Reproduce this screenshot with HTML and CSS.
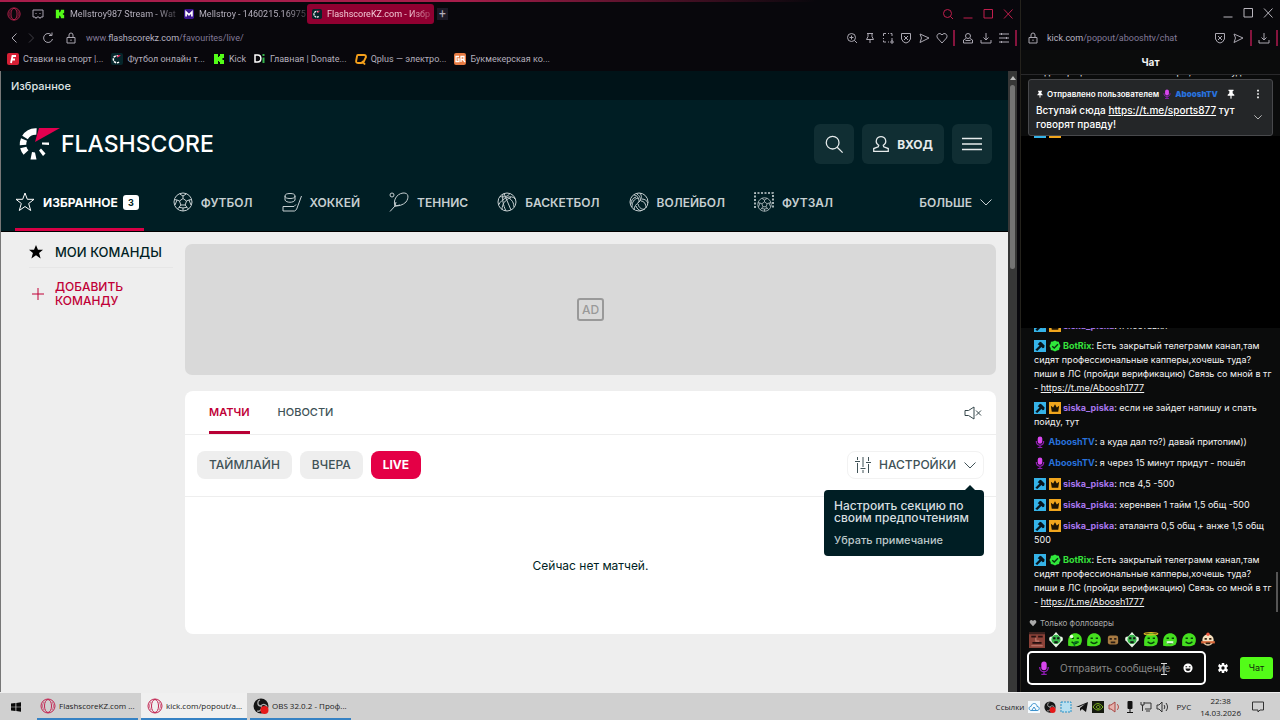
FILE: index.html
```html
<!DOCTYPE html>
<html lang="ru">
<head>
<meta charset="utf-8">
<title>FlashscoreKZ.com - Избранное</title>
<link rel="stylesheet" href="styles.css">
</head>
<body>
<svg class="defs" aria-hidden="true">
  <symbol id="lock" viewBox="0 0 12 12"><path d="M2 5.500h8V11H2zM4 5.500V3a2 2 0 0 1 4 0v2.500M6 7.500v1.500"/></symbol>
  <symbol id="search" viewBox="0 0 12 12"><circle cx="5.500" cy="5.500" r="4"/><path d="M8.500 8.500 11 11"/></symbol>
  <symbol id="zoomin" viewBox="0 0 12 12"><circle cx="5.500" cy="5.500" r="4"/><path d="M8.500 8.500 11 11M3.500 5.500h4M5.500 3.500v4"/></symbol>
  <symbol id="pin" viewBox="0 0 12 12"><path d="M3 1.500h6M4 1.500v3L2.500 7.500h7L8 4.500v-3M6 7.500V11"/></symbol>
  <symbol id="pinsolid" viewBox="0 0 12 12"><path d="M3 1h6v1.500H8V5l2 2v1H6.700v3L6 12l-.700-1V8H2V7l2-2V2.500H3z" fill="#fff" stroke="none"/></symbol>
  <symbol id="snap" viewBox="0 0 12 12"><path d="M1.500 4V1.500H4M6 1.500h1M8.500 1.500H10V4M10 6v3M1.500 6v1M1.500 8.500V10H4M6 10h1M8 10h4M10 8v4"/></symbol>
  <symbol id="shield" viewBox="0 0 12 12"><path d="M1.500 1.500h9V7L8.500 10 6 11 3.500 10 1.500 7zM4 4l4 4M8 4 4 8"/></symbol>
  <symbol id="send" viewBox="0 0 12 12"><path d="M2 2l9 4-9 4.500L3.500 6z"/></symbol>
  <symbol id="heart" viewBox="0 0 12 12"><path d="M6 11 1.500 6C-.5 3 3.500-.5 6 3 8.500-.5 12.500 3 10.500 6z"/></symbol>
  <symbol id="person" viewBox="0 0 12 12"><circle cx="6" cy="4" r="2.500"/><path d="M4 6.500 1.500 8v3h9V8L8 6.500M3.500 8.500h5"/></symbol>
  <symbol id="download" viewBox="0 0 12 12"><path d="M6 1v7M3.500 5.500 6 8l2.500-2.500M1 8v3h10V8"/></symbol>
  <symbol id="panel" viewBox="0 0 12 12"><path d="M1 2h2M4 2h7M1 6h7M9 6h2M1 10h2M4 10h7M3.500 1v2M8.500 5v2M3.500 9v2"/></symbol>
  <symbol id="min" viewBox="0 0 12 12"><path d="M1.500 10h9"/></symbol>
  <symbol id="max" viewBox="0 0 12 12"><path d="M2 1.500h8.500V10H2z"/></symbol>
  <symbol id="close" viewBox="0 0 12 12"><path d="M2 1.500l8.500 9M10.500 1.500 2 10.500"/></symbol>
  <symbol id="down" viewBox="0 0 12 12"><path d="M.5 3.500 6 9l5.500-5.500"/></symbol>
  <symbol id="opera" viewBox="0 0 16 16"><circle cx="8" cy="8" r="7" fill="none" stroke="#c22350"/><ellipse cx="8" cy="8" rx="3.500" ry="6.500" fill="none" stroke="#c22350"/><path d="M4 4c-2 3-2 5 0 8M12 4c2 3 2 5 0 8" fill="none" stroke="#c22350" stroke-width=".6"/></symbol>
  <symbol id="kick" viewBox="0 0 12 12"><path d="M1 1h4v3h1V3h1V1h4v4H9.500v2H11v4H7V9H6V8H5v3H1z" fill="#53fc18"/></symbol>
  <symbol id="fs" viewBox="0 0 12 12"><rect width="12" height="12" rx="2" fill="#06262b"/><path d="M8 3.500A3.500 3.500 0 1 0 8 9" fill="none" stroke="#fff" stroke-width="1.500" stroke-dasharray="2.500 .8"/><path d="M6 5l1-3h3z" fill="#e0124d"/></symbol>
  <symbol id="axe" viewBox="0 0 13 13"><rect width="13" height="13" fill="#35b3e8"/><path d="M1.500 10.500 6 6 4 4.500 6.500 2l1.500.5L11.500 6 11 8.500 9.500 9 8 7.500l-4.500 4.500z" fill="#08151c"/></symbol>
  <symbol id="crown" viewBox="0 0 13 13"><rect width="13" height="13" fill="#f0a51d"/><path d="M2 4l2.500 2 2-3.500L8.500 6 11 4l-1 6.500H3z" fill="#1c1303"/></symbol>
  <symbol id="ok" viewBox="0 0 13 13"><path d="M6.500.5 8.400 1.600 10.600 1.800 11.200 4 12.500 6.500 11.300 8.600 10.900 10.900 8.600 11.300 6.500 12.500 4.400 11.400 2 10.900 1.700 8.700.5 6.500 1.700 4.300 2.100 2 4.300 1.700z" fill="#2fe73b"/><path d="M3.500 6.700l2.200 2 4-4" fill="none" stroke="#0a3010" stroke-width="1.500"/></symbol>
  <symbol id="mic" viewBox="0 0 13 13"><rect x="4" y=".5" width="5" height="8" rx="2.500" fill="#d946ef"/><path d="M2.500 5.500c0 6 8 6 8 0M6.500 10v2.500M4 12.500h5" fill="none" stroke="#8f1cb4" stroke-width="1.300"/></symbol>
  <symbol id="ball" viewBox="0 0 20 20"><circle cx="10" cy="10" r="9"/><path d="M10 6.500l3.500 2.500-1.300 4H7.800L6.500 9zM10 6.500V4M13.500 9l2.500-1M12.200 13l1.800 2.300M7.800 13 6 15.300M6.500 9 4 8M6.500 1.800 10 4l3.500-2.200M18.700 7.500 16 8l2 5M15.500 17l-1.500-1.700-4 .7-4-.7L4.500 17M2 13l2-5-2.700-.5M10 16v3"/></symbol>
  <symbol id="obs" viewBox="0 0 16 16"><circle cx="8" cy="8" r="7.500" fill="#151515"/><path d="M8 8c-4 0-4-5-1-6M8 8c2-3 6-1 6 1M8 8c2 3-1 6-4 5" fill="none" stroke="#aaa" stroke-width="1.300"/><circle cx="11.500" cy="12" r="4" fill="#e61919"/></symbol>
  <symbol id="slime" viewBox="0 0 14 14"><path d="M1 8c0-9 12-9 12-1 0 6-5 6-12 5z" fill="#45e01f"/><path d="M4 5.500h2M8.500 5.500h2M4 8.500c2 2 4 2 6 0" fill="none" stroke="#06410a" stroke-width="1.200"/></symbol>
  <symbol id="skull" viewBox="0 0 14 14"><path d="M7 0l6 7-6 6.500L1 7z" fill="#e9f6e6"/><circle cx="3" cy="6" r="2" fill="#e9f6e6"/><circle cx="11" cy="6" r="2" fill="#e9f6e6"/><circle cx="7" cy="6.500" r="4" fill="#37b64a"/><path d="M4.500 5.500h2M8 5.500h2M5.500 9h3" stroke="#111" stroke-width="1.800"/></symbol>
</svg>

<main class="desktop">
  <section class="browser">
    <div class="tabs">
      <svg class="i14"><use href="#opera"/></svg>
      <svg class="i12 line badge" viewBox="0 0 12 12"><path d="M1 2h10v7H9l-1 1.500L7 9H5L4 10.500 3 9H1zM3.500 5.500h1M7.500 5.500h1"/></svg>
      <button class="tab"><svg class="i10"><use href="#kick"/></svg><span>Mellstroy987 Stream - Wat</span></button>
      <button class="tab"><svg class="i10" viewBox="0 0 12 12"><rect width="12" height="12" rx="2" fill="#3b168f"/><path d="M2.500 9V3.500L6 7l3.500-3.500V9" fill="none" stroke="#fff" stroke-width="2"/></svg><span>Mellstroy - 1460215.16975</span></button>
      <button class="tab active"><svg class="i10"><use href="#fs"/></svg><span>FlashscoreKZ.com - Избр</span></button>
      <button class="plus" aria-label="Новая вкладка">+</button>
      <div class="wins red"><svg class="i12 line"><use href="#search"/></svg><svg class="i12 line"><use href="#min"/></svg><svg class="i12 line"><use href="#max"/></svg><svg class="i12 line"><use href="#close"/></svg></div>
    </div>
    <div class="address">
      <svg class="i12 line" viewBox="0 0 12 12"><path d="M8.500 1.500 4 6l4.500 4.500"/></svg>
      <svg class="i12 line dim" viewBox="0 0 12 12"><path d="M4 1.500 8.500 6 4 10.500"/></svg>
      <svg class="i12 line" viewBox="0 0 12 12"><path d="M9.500 3A4.500 4.500 0 1 0 10.500 7M10 .5v3H7"/></svg>
      <svg class="i12 line lock"><use href="#lock"/></svg>
      <p class="url">www.<b>flashscorekz.com</b>/favourites/live/</p>
      <div class="tools"><svg class="i12 line"><use href="#zoomin"/></svg><svg class="i12 line"><use href="#pin"/></svg><svg class="i12 line"><use href="#snap"/></svg><svg class="i12 line"><use href="#shield"/></svg><svg class="i12 line"><use href="#send"/></svg><svg class="i12 line"><use href="#heart"/></svg></div>
      <i class="bar"></i>
      <div class="tools"><svg class="i12 line"><use href="#person"/></svg><svg class="i12 line"><use href="#download"/></svg><svg class="i12 line"><use href="#panel"/></svg></div>
      <i class="bar"></i>
    </div>
    <nav class="marks">
      <a href="#"><svg class="i12" viewBox="0 0 12 12"><rect width="12" height="12" rx="2" fill="#d71f35"/><path d="M4 10 5.500 3H9M4.700 6.500H8" fill="none" stroke="#fff" stroke-width="1.800"/></svg>Ставки на спорт |...</a>
      <a href="#"><svg class="i12"><use href="#fs"/></svg>Футбол онлайн т...</a>
      <a href="#"><svg class="i12"><use href="#kick"/></svg>Kick</a>
      <a href="#"><svg class="i12" viewBox="0 0 12 12"><path d="M1 2h2.500c4.500 0 4.500 7 0 7H1z" fill="none" stroke="#fff" stroke-width="1.500"/><path d="M9.500 4.500V10M9.500 1v2" stroke="#35b34c" stroke-width="2"/></svg>Главная | Donate...</a>
      <a href="#"><svg class="i12" viewBox="0 0 12 12"><path d="M3 2h6c2 0 2 1 2 2L9 8c0 2-1 2-3 2H3C1 10 1 9 1.300 7L2 3.500C2 2 2 2 3 2zM7 8l3 3.500" fill="none" stroke="#f5a01b" stroke-width="1.900"/></svg>Qplus — электро...</a>
      <a href="#"><svg class="i12" viewBox="0 0 12 12"><rect width="12" height="12" rx="2" fill="#e77a42"/><path d="M5 3.500H2v5h3V6H3.500M7 9V3.500h3v3H7M9 6.500 11 9" fill="none" stroke="#fff" stroke-width="1.300"/></svg>Букмекерская ко...</a>
    </nav>

    <div class="viewport">
      <div class="site">
        <div class="crumb">Избранное</div>
        <header class="head">
          <div class="brandrow">
            <a class="logo" href="#"><svg viewBox="0 0 44 34"><g fill="none" stroke="#fff" stroke-width="6.500"><path d="M20.500 4.500A12.500 12.500 0 0 0 9 10.500"/><path d="M8 12.500A12.500 12.500 0 0 0 7 18"/><path d="M7.300 20.500A12.500 12.500 0 0 0 10 25.500"/></g><path d="M16 25l-1.500 7.500h6L19 25.500zM23 23.500l4 5.500 2.500-2.500-4.500-5zM26 15.500h7v2.500l-7-.5z" fill="#fff"/><path d="M23 1h21L19 15z" fill="#e3004f"/></svg><span>FLASHSCORE</span></a>
            <button class="hbtn" aria-label="Поиск"><svg class="i20 line" viewBox="0 0 22 22"><circle cx="9.500" cy="9.500" r="7"/><path d="m14.500 14.500 6 6"/></svg></button>
            <button class="hbtn login"><svg class="i20 line" viewBox="0 0 22 22"><path d="M8.500 12.500C3.500 9 6 3 11 3s7.500 6 2.500 9.500l.5 1.500 5 2v3H3v-3l5-2z"/></svg>ВХОД</button>
            <button class="hbtn" aria-label="Меню"><svg class="i20 line menu" viewBox="0 0 20 20"><path d="M0 4.500h20M0 10h20M0 15.500h20"/></svg></button>
          </div>
          <nav class="sports">
            <a class="on" href="#"><svg class="i20 line" viewBox="0 0 20 20"><path d="M10 1l2.300 6.300H19l-5.300 4.200 2 7L10 14.500l-5.700 4 2-7L1 7.300h6.700z"/></svg>ИЗБРАННОЕ<span class="count">3</span></a>
            <a href="#"><svg class="i20 line"><use href="#ball"/></svg>ФУТБОЛ</a>
            <a href="#"><svg class="i20 line" viewBox="0 0 20 20"><ellipse cx="8" cy="4" rx="5" ry="2.500"/><path d="M3 4v4c1 3 9 3 10 0V4M19.500 4l-5 13.500-2 1.500H1v-4.500h11l2-2"/></svg>ХОККЕЙ</a>
            <a href="#"><svg class="i20 line" viewBox="0 0 20 20"><circle cx="3" cy="3" r="2"/><path d="M6 14c-2-5 1-12 8-13 6-.5 6 5 3 9-3 3-7 4-11 4l-5 5.500M6 14l1-4M6 14l5-1"/></svg>ТЕННИС</a>
            <a href="#"><svg class="i20 line" viewBox="0 0 20 20"><circle cx="10" cy="10" r="9"/><path d="M7 1.500 14 18M3 4.500c4 1 8 0 10-3M1.500 13C5 6 15 2 18 7M5 17.500c0-5 3-10 9-12M6 2c-1 5 0 11 3 17M12 6c3 2 5 5 5 9"/></svg>БАСКЕТБОЛ</a>
            <a href="#"><svg class="i20 line" viewBox="0 0 20 20"><circle cx="10" cy="10" r="9"/><path d="M10 10c0-4-2-7-5-7M10 10c3-3 3-6 1-9M10 10c-3 2-5 5-5 8M8 2c3 2 4 5 3 7M13 7c3 0 5 2 6 4M12 9c3 0 5 3 5 7M9 12c1 4 4 6 7 5M7 14c1 3 3 4 5 5M3 15c0-5 2-8 6-9M2 12c0-4 2-6 5-7"/></svg>ВОЛЕЙБОЛ</a>
            <a href="#"><svg class="i20 line" viewBox="0 0 20 20"><path d="M1 16V1h18v15" stroke-width="1.700" stroke-dasharray="2 1.500"/><svg x="3" y="5" width="15" height="15"><use href="#ball"/></svg></svg>ФУТЗАЛ</a>
            <a class="more" href="#">БОЛЬШЕ<svg class="i12 line"><use href="#down"/></svg></a>
          </nav>
        </header>
        <div class="content">
          <aside class="teams">
            <div class="mine"><svg viewBox="0 0 20 20"><path d="M10 0l2.800 6.800H20l-5.600 4.500 2.200 8L10 14.800l-6.600 4.500 2.200-8L0 6.800h7.200z"/></svg>МОИ КОМАНДЫ</div>
            <button class="add"><svg class="i12 line" viewBox="0 0 12 12"><path d="M6 0v12M0 6h12"/></svg><span>ДОБАВИТЬ КОМАНДУ</span></button>
          </aside>
          <div class="main">
            <div class="ad"><span>AD</span></div>
            <section class="card">
              <div class="switch"><a class="on" href="#">МАТЧИ</a><a href="#">НОВОСТИ</a><button class="mute" aria-label="Звук"><svg viewBox="0 0 18 14"><path d="M1 4.500h3.500L10 1v12L4.500 9.500H1zM12 4.500l5 5M17 4.500l-5 5"/></svg></button></div>
              <div class="filters"><button>ТАЙМЛАЙН</button><button>ВЧЕРА</button><button class="live">LIVE</button>
                <div class="setwrap"><button class="settings"><svg class="i16 line" viewBox="0 0 16 16"><path d="M2.500 0v3M2.500 6v10M0 4.500h5M8 0v10M8 13v3M5.500 11.500h5M13.500 0v4M13.500 7v9M11 5.500h5"/></svg>НАСТРОЙКИ<svg class="i12 line"><use href="#down"/></svg></button>
                  <div class="tip" role="tooltip"><strong>Настроить секцию по своим предпочтениям</strong><span>Убрать примечание</span></div></div>
              </div>
              <p class="empty">Сейчас нет матчей.</p>
            </section>
          </div>
        </div>
      </div>
      <div class="scroll"><span class="arrow"></span><i></i></div>
    </div>
  </section>

  <section class="popout">
    <div class="wins"><svg class="i12 line"><use href="#min"/></svg><svg class="i12 line"><use href="#max"/></svg><svg class="i12 line"><use href="#close"/></svg></div>
    <div class="address chataddr"><svg class="i12 line"><use href="#lock"/></svg><p class="url"><b>kick.com</b>/popout/abooshtv/chat</p><svg class="i12 line"><use href="#shield"/></svg><svg class="i12 line"><use href="#send"/></svg><i class="bar"></i><svg class="i12 line"><use href="#download"/></svg><i class="bar"></i></div>
    <h1>Чат</h1>
    <div class="sliver"><span>сидят профессиональные капперы,хочешь туда?</span></div>
    <div class="pinned">
      <div class="pinhead"><svg class="i8"><use href="#pinsolid"/></svg><span>Отправлено пользователем</span><svg class="i10"><use href="#mic"/></svg><b class="blue">AbooshTV</b><svg class="i10 far"><use href="#pinsolid"/></svg><svg class="i10 dots" viewBox="0 0 12 12"><path d="M5 1h2v2H5zM5 5h2v2H5zM5 9h2v2H5z" fill="#fff"/></svg></div>
      <div class="pinbody"><p>Вступай сюда <a href="#">https://t.me/sports877</a> тут говорят правду!</p><svg class="i8 line chev"><use href="#down"/></svg></div>
    </div>
    <div class="hidden-area"><i></i><i></i></div>
    <div class="list">
      <div class="msg cut"><div><svg class="bd"><use href="#axe"/></svg> <svg class="bd"><use href="#crown"/></svg> <b class="violet">siska_piska</b>: я поставил</div></div>
      <div class="msg"><svg class="bd"><use href="#axe"/></svg> <svg class="bd"><use href="#ok"/></svg> <b class="green">BotRix</b>: Есть закрытый телеграмм канал,там сидят профессиональные капперы,хочешь туда? пиши в ЛС (пройди верификацию) Связь со мной в тг - <a href="#">https://t.me/Aboosh1777</a></div>
      <div class="msg"><svg class="bd"><use href="#axe"/></svg> <svg class="bd"><use href="#crown"/></svg> <b class="violet">siska_piska</b>: если не зайдет напишу и спать пойду, тут</div>
      <div class="msg"><svg class="bd"><use href="#mic"/></svg> <b class="blue">AbooshTV</b>: а куда дал то?) давай притопим))</div>
      <div class="msg"><svg class="bd"><use href="#mic"/></svg> <b class="blue">AbooshTV</b>: я через 15 минут придут - пошёл</div>
      <div class="msg"><svg class="bd"><use href="#axe"/></svg> <svg class="bd"><use href="#crown"/></svg> <b class="violet">siska_piska</b>: псв 4,5 -500</div>
      <div class="msg"><svg class="bd"><use href="#axe"/></svg> <svg class="bd"><use href="#crown"/></svg> <b class="violet">siska_piska</b>: херенвен 1 тайм 1,5 общ -500</div>
      <div class="msg"><svg class="bd"><use href="#axe"/></svg> <svg class="bd"><use href="#crown"/></svg> <b class="violet">siska_piska</b>: аталанта 0,5 общ + анже 1,5 общ 500</div>
      <div class="msg"><svg class="bd"><use href="#axe"/></svg> <svg class="bd"><use href="#ok"/></svg> <b class="green">BotRix</b>: Есть закрытый телеграмм канал,там сидят профессиональные капперы,хочешь туда? пиши в ЛС (пройди верификацию) Связь со мной в тг - <a href="#">https://t.me/Aboosh1777</a></div>
      <i class="thumb"></i>
    </div>
    <p class="only"><svg class="i8 solid" viewBox="0 0 12 12"><use href="#heart"/></svg>Только фолловеры</p>
    <div class="emotes">
      <svg viewBox="0 0 14 14"><path d="M0 0h14v14H0z" fill="#8c4238"/><path d="M0 0h14v2H0z" fill="#3d211e"/><path d="M2 4h4M8 4h4M3 9.500h8" stroke="#251010" stroke-width="1.600"/><path d="M6 5v3h3M2 12h10" fill="none" stroke="#c58073"/></svg>
      <svg><use href="#skull"/></svg>
      <svg viewBox="0 0 14 14"><use href="#slime"/><circle cx="4" cy="4" r="1.500" fill="#eaffdf"/><path d="M7 12c-2-2 0-4 3-3" fill="none" stroke="#087421" stroke-width="1.500"/></svg>
      <svg><use href="#slime"/></svg>
      <svg viewBox="0 0 14 14"><rect x="2.500" y="3" width="9" height="8" rx="2" fill="#a77a42"/><path d="M4 6h2M8 6h2M5 9h4" stroke="#2d1e13" stroke-width="1.500"/></svg>
      <svg><use href="#skull"/></svg>
      <svg viewBox="0 0 14 14"><use href="#slime"/><ellipse cx="7" cy="1.500" rx="6" ry="1" fill="none" stroke="#e6bd28"/></svg>
      <svg viewBox="0 0 14 14"><use href="#slime"/><path d="M4 8h6v2H4z" fill="#d9ffd1"/></svg>
      <svg><use href="#slime"/></svg>
      <svg viewBox="0 0 14 14"><circle cx="7" cy="7" r="5" fill="#f6dfbd"/><circle cx="7" cy="2" r="1.500" fill="#ef5a42"/><path d="M1 9h12" stroke="#d86a3c" stroke-width="2"/><path d="M4 6h2M8 6h2M5 10h4" stroke="#321" stroke-width="1.500"/></svg>
    </div>
    <form class="compose">
      <div class="field"><svg class="i14"><use href="#mic"/></svg><input type="text" aria-label="Сообщение" placeholder="Отправить сообщение"><svg class="i10" viewBox="0 0 12 12"><circle cx="6" cy="6" r="5.500" fill="#fff"/><path d="M3 4h2v1H3zM7 4h2v1H7zM3 6.500h6c0 4-6 4-6 0z" fill="#111"/></svg><svg class="caret" viewBox="0 0 6 12"><path d="M0 .5h6M3 1v10M0 11.500h6" stroke="#ddd"/></svg></div>
      <svg class="i10" viewBox="0 0 12 12"><path d="M4.500 0h3v2l1.500.5L10.500 1l1.500 3-1.500 1v2L12 8l-1.500 3L9 9.500l-1.500.500v2h-3v-2L3 9.500 1.500 11 0 8l1.500-1V5L0 4l1.500-3L3 2.500 4.500 2zM6 4a2 2 0 1 0 0 4 2 2 0 0 0 0-4z" fill="#fff"/></svg>
      <button type="button">Чат</button>
    </form>
  </section>
</main>

<footer class="taskbar">
  <button class="start" aria-label="Пуск"><svg class="i10" viewBox="0 0 10 10"><path d="M0 1.500 4.500 1v3.700H0zM5.300.9 10 .2v4.500H5.300zM0 5.300h4.500V9L0 8.500zM5.300 5.300H10v4.500l-4.700-.7z" fill="#080808"/></svg></button>
  <button class="task"><svg class="i16"><use href="#opera"/></svg>FlashscoreKZ.com ...</button>
  <button class="task cur"><svg class="i16"><use href="#opera"/></svg>kick.com/popout/a...</button>
  <button class="task"><svg class="i16"><use href="#obs"/></svg>OBS 32.0.2 - Проф...</button>
  <div class="tray">
    <span>Ссылки</span>
    <svg class="i12" viewBox="0 0 12 12"><path d="M0 0h12v12H0z" fill="#f5fbff"/><path d="M3 9.500C0 9 1 5 3 5.500 4 1 9 2 9 5.500c3 0 3 4 0 4zM4 9l2-3 2 3" fill="none" stroke="#3b91cc"/></svg>
    <svg class="i12" viewBox="0 0 16 16"><use href="#obs"/></svg>
    <svg class="i12" viewBox="0 0 12 12"><path d="M1 1h10v10H1z" fill="#b8dff0" stroke="#268fc5" stroke-dasharray="2 1"/></svg>
    <svg class="i12" viewBox="0 0 12 12"><path d="M0 6l12-5-2 10-4-3-2 2V7l5-4-6 3z" fill="#111"/></svg>
    <svg class="i12" viewBox="0 0 12 12"><path d="M0 0h12v12H0z" fill="#151a10"/><path d="M1 6c3-5 7-4 10 0-3 4-7 4-10 0zM4 6c1-2 4-2 4 0s-3 2-4 0" fill="none" stroke="#83bd20"/></svg>
    <svg class="i12" viewBox="0 0 12 12"><path d="M1 4h2l4-3v10L3 8H1zM9 3c2 2 2 4 0 6" fill="#e7b3ae" stroke="#a94744"/></svg>
    <svg class="i12" viewBox="0 0 12 12"><rect x="3.500" width="5" height="8" rx="1" fill="#111"/><path d="M6 8v3M3 11.500h6" stroke="#111"/></svg>
    <svg class="i12 line dark" viewBox="0 0 12 12"><path d="M4 2h7v6H5M1 1v3h3V1M2.500 4v6M6 10h4"/></svg>
    <svg class="i12 line dark" viewBox="0 0 12 12"><path d="M1 4h2l3-3v10L3 8H1zM8 4c1 1 1 3 0 4M10 2c2 3 2 5 0 8"/></svg>
    <span class="lang">РУС</span>
    <span class="clock">22:38<br>14.03.2026</span>
    <svg class="i12 line dark" viewBox="0 0 12 12"><path d="M.5 1h11v8H8l-2 2V9H.5z"/></svg>
  </div>
</footer>
</body>
</html>
```

FILE: styles.css
```css
* { box-sizing: border-box; }
body { margin: 0; min-height: 100vh; display: flex; flex-direction: column; background: #000; font-family: Inter, "Open Sans", sans-serif; }
a { color: inherit; text-decoration: none; }
button { border: 0; padding: 0; background: none; color: inherit; font: inherit; }
svg { flex: none; display: block; }
p, h1 { margin: 0; }
.defs { position: absolute; width: 0; height: 0; }
.line { fill: none; stroke: currentColor; stroke-width: 1; }
.i8 { width: 8px; height: 8px; }
.i10 { width: 10px; height: 10px; }
.i12 { width: 12px; height: 12px; }
.i14 { width: 14px; height: 14px; }
.i16 { width: 16px; height: 16px; }
.i20 { width: 20px; height: 20px; }

.desktop { flex: 1; display: grid; grid-template-columns: minmax(0, 1fr) 260px; }
.browser { display: flex; flex-direction: column; background: #08070c; padding-right: 3px; border-top: 2px solid #8d1a43; border-image: linear-gradient(90deg, #a81d4b 45%, #08070c 80%) 1; border-right: 0; border-left: 0; border-bottom: 0; min-width: 0; }
.tabs { height: 24px; display: flex; align-items: center; padding: 0 0 0 7px; font: 9px/14px Roboto, sans-serif; color: #b4afbc; }
.badge { margin: 0 9px 0 11px; color: #aaa5b2; }
.tab { width: 126px; height: 20px; padding: 0 2px; margin-right: 3px; display: flex; align-items: center; gap: 5px; white-space: nowrap; }
.tab span { mask-image: linear-gradient(90deg, #000 80%, rgba(0, 0, 0, .3)); }
.tab.active { width: 127px; background: #900031; color: #f2c8d5; border-radius: 3px; padding-left: 5px; margin-left: -4px; }
.plus { width: 11px; height: 12px; line-height: 11px; font-size: 12px; background: #1c1926; }
.wins { display: flex; gap: 8px; margin-left: auto; color: #b8b5bd; }
.wins.red { color: #c01e4d; padding-right: 3px; }
.address { height: 23px; display: flex; align-items: center; padding-left: 8px; color: #aaa7b1; gap: 6px; }
.dim { opacity: .35; }
.lock { margin-left: 6px; }
.url { font: 9px/14px Roboto, sans-serif; color: #837b99; flex: 1; }
.browser .url { margin-left: 4px; }
.url b { color: #b8b4c2; font-weight: 400; }
.tools { display: flex; gap: 6px; }
.bar { width: 2px; height: 16px; background: #85143d; }
.browser .bar + .tools { margin-left: 2px; }
.browser .address { gap: 5px; }
.marks { height: 22px; display: flex; align-items: center; gap: 8px; padding: 0 7px 2px; font: 9px/14px Roboto, sans-serif; color: #b4afbc; }
.marks a { display: flex; align-items: center; gap: 4px; white-space: nowrap; }

.viewport { flex: 1; display: flex; border-left: 1px solid #777; }
.site { flex: 1; min-width: 0; background: #eee; color: #001e24; display: flex; flex-direction: column; }
.crumb { height: 29px; padding: 0 10px; line-height: 30px; font-size: 11px; font-weight: 500; color: #dfe4e5; background: #001318; }
.head { background: #001e24; color: #c6cfd1; padding: 24px 16px 0 15px; border-bottom: 1px solid #000; }
.brandrow { display: flex; align-items: center; gap: 8px; }
.logo { margin-right: auto; display: flex; align-items: center; gap: 1px; color: #fff; font-size: 23px; line-height: 30px; font-weight: 500; }
.logo svg { width: 44px; height: 34px; }
.hbtn { min-width: 40px; height: 40px; border-radius: 6px; background: #102e33; color: #e6ebec; display: flex; justify-content: center; align-items: center; gap: 6px; font-size: 12px; font-weight: 700; }
.hbtn .line { stroke-width: 1.400; }
.login { padding: 0 11px 0 9px; }
.sports { display: flex; align-items: center; height: 67px; gap: 29px; font-size: 12px; font-weight: 600; margin-left: -1px; }
.sports a { display: flex; align-items: center; gap: 8px; height: 100%; padding-top: 9px; white-space: nowrap; }
.sports a.on { color: #fff; font-weight: 700; border-bottom: 3px solid #d90045; padding-right: 5px; padding-top: 12px; }
.count { min-width: 16px; height: 15px; border-radius: 3px; background: #fff; color: #001e24; font-size: 9px; line-height: 15px; text-align: center; margin-left: -3px; }
.sports .more { margin-left: auto; }
.content { flex: 1; display: grid; grid-template-columns: 144px minmax(0, 1fr); gap: 12px; padding: 12px 12px 12px 28px; }
.mine { display: flex; align-items: center; gap: 12px; height: 24px; padding-bottom: 8px; border-bottom: 1px solid #e6e6e6; font-size: 13px; font-weight: 500; white-space: nowrap; }
.mine svg { width: 14px; height: 14px; }
.add { display: flex; align-items: center; gap: 11px; padding: 12px 0 0 3px; color: #c00037; font-size: 12px; line-height: 14px; font-weight: 500; text-align: left; }
.add span { width: 72px; }
.ad { height: 131px; border-radius: 7px; background: #d9d9d9; display: grid; place-items: center; }
.ad span { border: 2px solid #999; border-radius: 3px; padding: 0 3px; color: #999; font-size: 12px; line-height: 19px; font-weight: 500; }
.card { margin-top: 16px; background: #fff; border-radius: 8px; min-height: 243px; }
.switch { display: flex; height: 44px; border-bottom: 1px solid #eee; padding: 0 14px 0 24px; gap: 28px; font-size: 11px; font-weight: 500; color: #405257; }
.switch a { line-height: 43px; }
.switch a.on { color: #c00037; font-weight: 600; border-bottom: 3px solid #b80035; }
.mute { margin-left: auto; }
.mute svg { width: 18px; height: 14px; fill: none; stroke: #34464a; }
.filters { height: 62px; display: flex; align-items: center; border-bottom: 1px solid #eee; padding: 0 12px 2px; gap: 8px; font-size: 12px; font-weight: 500; color: #405257; }
.filters button { height: 28px; border-radius: 8px; background: #eee; padding: 0 12px; }
.filters .live { background: #e40046; color: #fff; font-weight: 700; }
.setwrap { margin-left: auto; position: relative; }
.filters .settings { display: flex; align-items: center; gap: 8px; padding: 0 7px; background: #fff; border: 1px solid #f2f2f2; }
.tip { position: absolute; top: 39px; right: 0; width: 160px; background: #001e24; color: #d7dfe0; border-radius: 4px; padding: 10px; font-size: 11px; line-height: 12px; }
.tip::before { content: ""; position: absolute; top: -5px; right: 8px; border: 6px solid transparent; border-top: 0; border-bottom-color: #001e24; }
.tip strong { display: block; font-size: 12px; font-weight: 500; white-space: nowrap; white-space: normal; margin-right: -6px; }
.tip span { display: block; margin-top: 10px; color: #bcc8ca; }
.empty { padding-top: 60px; font-size: 12px; line-height: 18px; font-weight: 400; text-align: center; }
.scroll { width: 9px; background: #373737; display: flex; flex-direction: column; align-items: center; }
.arrow { margin: 5px 0; border: 3px solid transparent; border-top: 0; border-bottom: 4px solid #bbb; }
.scroll i { width: 5px; height: 184px; border-radius: 3px; background: #747474; }

.popout { background: #0b0c0c; border-left: 1px solid #24221c; display: flex; flex-direction: column; color: #f4f4f4; font-size: 9px; line-height: 14px; min-width: 0; }
.popout > .wins { height: 25px; align-items: center; margin: 0; justify-content: flex-end; padding-right: 6px; background: #08080b; }
.chataddr { height: 25px; padding: 0 2px 0 6px; background: #08080b; }
.chataddr .url { margin-left: 2px; }
.popout h1 { height: 25px; border-bottom: 1px solid #29292b; text-align: center; font-size: 10px; line-height: 24px; font-weight: 700; }
.sliver { height: 4px; overflow: hidden; display: flex; align-items: flex-end; padding-left: 13px; }
.pinned { margin: 0 7px; padding: 6px 7px 4px; min-height: 57px; border: 1px solid #48494c; border-radius: 3px; background: #242628; color: #fff; }
.pinhead { display: flex; align-items: center; gap: 3px; white-space: nowrap; height: 16px; font-size: 8px; font-weight: 600; }
.far { margin-left: auto; }
.dots { margin-left: 14px; margin-right: 2px; }
.pinbody { display: flex; align-items: center; justify-content: space-between; font-size: 10px; line-height: 14px; font-weight: 500; padding-top: 1px; }
.pinbody p { width: 206px; }
.chev { margin-right: 3px; }
.pinned a, .msg a { text-decoration: underline; }
.hidden-area { flex: 1; background: #000; display: flex; gap: 3px; padding-left: 13px; }
.hidden-area i { width: 12px; height: 2px; background: #35b3e8; }
.hidden-area i + i { background: #f0a51d; }
.list { position: relative; display: flex; flex-direction: column; gap: 6px; padding: 0 4px 7px 13px; }
.msg { min-height: 15px; }
.msg.cut { min-height: 0; height: 5px; overflow: hidden; display: flex; align-items: flex-end; }
.bd { display: inline-block; width: 12px; height: 12px; vertical-align: -3px; }
.violet { color: #a675ec; }
.blue { color: #2871db; }
.green { color: #36e33c; }
.thumb { position: absolute; right: 2px; bottom: 4px; width: 2px; height: 40px; background: #555; }
.only { display: flex; align-items: center; gap: 3px; padding-left: 8px; color: #aaa; font-size: 8px; }
.solid { fill: #aaa; }
.emotes { display: flex; gap: 3px; padding: 2px 8px 3px; }
.emotes svg { width: 16px; height: 16px; }
.compose { display: flex; align-items: center; gap: 12px; padding: 0 7px 7px 6px; }
.field { position: relative; flex: 1; min-width: 0; height: 34px; border: 2px solid #fff; border-radius: 5px; display: flex; align-items: center; padding: 0 11px 0 8px; gap: 9px; }
.field input { min-width: 0; flex: 1; padding: 0; border: 0; background: none; color: #fff; font: 400 10px/14px Inter, sans-serif; }
.field input::placeholder { color: #888; opacity: 1; }
.caret { position: absolute; right: 37px; top: 10px; width: 6px; height: 12px; }
.compose button { width: 33px; height: 22px; border-radius: 3px; background: #53fc18; color: #122b0a; font-size: 9px; }

.taskbar { height: 28px; display: flex; align-items: stretch; background: #d0d0d0; border-top: 1px solid #eee; font: 8px/12px "Open Sans", sans-serif; color: #222; }
.start { width: 32px; padding-left: 11px; margin-right: 5px; }
.task { width: 101px; margin-right: 3px; display: flex; align-items: center; gap: 3px; padding-left: 3px; white-space: nowrap; border-bottom: 2px solid #3682c4; }
.cur { background: #f0f0f0; width: 106px; padding-left: 6px; }
.tray { margin-left: auto; display: flex; align-items: center; gap: 4px; padding-right: 16px; }
.dark { color: #333; }
.lang { margin-left: 4px; }
.clock { text-align: center; margin: 0 7px 0 5px; }
```
